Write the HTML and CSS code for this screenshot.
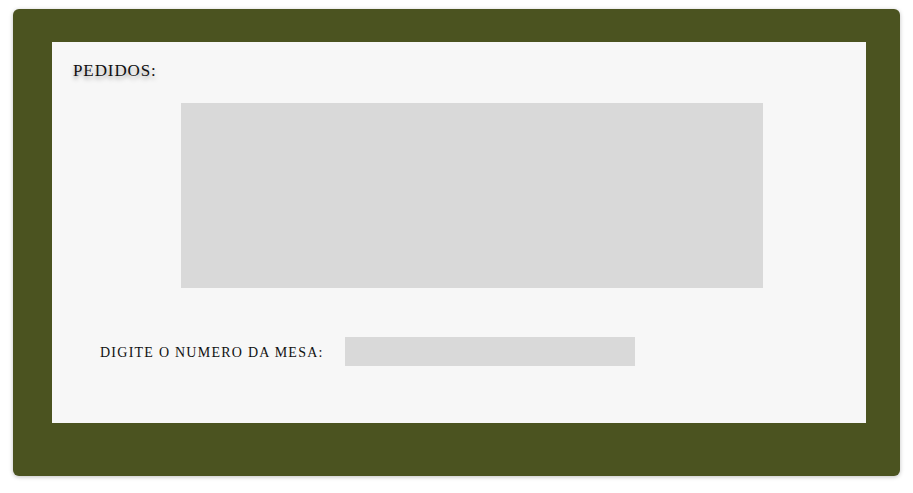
FILE: index.html
```html
<!DOCTYPE html>
<html lang="pt">
<head>
<meta charset="utf-8">
<title>Pedidos</title>
<link rel="stylesheet" href="styles.css">
</head>
<body>
<div class="frame">
  <div class="panel">
    <h1 class="title">PEDIDOS:</h1>
    <div class="orders"></div>
    <div class="table-row">
      <label class="label" for="mesa">DIGITE O NUMERO DA MESA:</label>
      <input class="input" id="mesa" type="text">
    </div>
  </div>
</div>
</body>
</html>
```
FILE: styles.css
```css
html, body {
  margin: 0;
  padding: 0;
  background: #ffffff;
}
body {
  padding: 9px 13px 17px 13px;
  font-family: "Liberation Serif", "DejaVu Serif", serif;
}
.frame {
  width: 887px;
  height: 467px;
  box-sizing: border-box;
  background: #4b5320;
  border-radius: 6px;
  box-shadow: 0 1px 4px rgba(0, 0, 0, 0.25);
  padding: 33px 34px 53px 39px;
}
.panel {
  width: 814px;
  height: 381px;
  background: #f7f7f7;
  box-sizing: border-box;
  padding-top: 18px;
  display: flex;
  flex-direction: column;
}
.title {
  margin: 0 0 0 21px;
  font-size: 17px;
  font-weight: normal;
  line-height: 22px;
  color: #111;
  letter-spacing: 0.9px;
  text-shadow: 0 3px 4px rgba(0, 0, 0, 0.35);
}
.orders {
  margin: 21px 0 0 129px;
  width: 582px;
  height: 185px;
  background: #d9d9d9;
}
.table-row {
  margin: 49px 0 0 48px;
  display: flex;
  align-items: center;
}
.label {
  font-size: 14px;
  color: #111;
  width: 245px;
  flex: none;
  letter-spacing: 1.25px;
  padding-top: 3px;
}
.input {
  width: 290px;
  height: 29px;
  box-sizing: border-box;
  border: none;
  background: #d9d9d9;
  margin: 0;
  padding: 0 6px;
  outline: none;
}
```
